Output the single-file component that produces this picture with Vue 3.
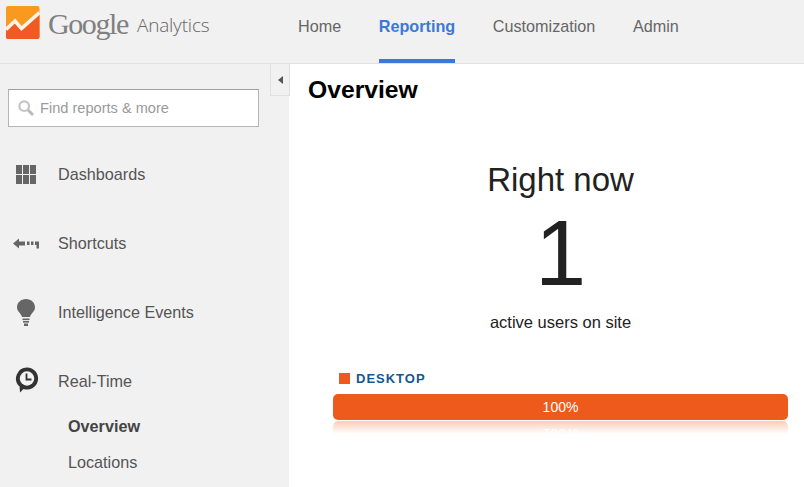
<script setup>
const navItems = [
  { label: 'Home' },
  { label: 'Reporting', active: true },
  { label: 'Customization' },
  { label: 'Admin' }
]
</script>

<template>
  <div class="page">
    <header class="top">
      <div class="brand">
        <svg class="logo" width="34" height="34" viewBox="0 0 34 34">
          <rect x="0" y="0" width="33.500" height="33" rx="2" fill="#f9991f" />
          <path d="M0 22 L9 14 L15 22 L33.500 6 L33.500 31 Q33.500 33 31.500 33 L2 33 Q0 33 0 31 Z" fill="#f15a22" />
          <path d="M0 23.500 L9 15 L15.500 22.500 L33.500 6.500" fill="none" stroke="#fdf3e6" stroke-width="3.600" />
        </svg>
        <span class="google">Google</span>
        <span class="analytics">Analytics</span>
      </div>
      <nav class="nav">
        <a v-for="n in navItems" :key="n.label" class="nav-item" :class="{ active: n.active }">{{ n.label }}</a>
      </nav>
    </header>
    <div class="body">
      <aside class="side">
        <div class="search">
          <svg width="18" height="18" viewBox="0 0 18 18">
            <circle cx="7.200" cy="7.200" r="4.800" fill="none" stroke="#c4c4c4" stroke-width="2.200" />
            <path d="M11 11 L16 16" stroke="#bbb" stroke-width="3" />
          </svg>
          <span>Find reports &amp; more</span>
        </div>
        <div class="menu">
          <div class="menu-item">
            <svg class="ic" width="22" height="22" viewBox="0 0 22 22">
              <g fill="#666">
                <rect x="1" y="1" width="6" height="9" /><rect x="8" y="1" width="6" height="9" /><rect x="15" y="1" width="6" height="9" />
                <rect x="1" y="11" width="6" height="9" /><rect x="8" y="11" width="6" height="9" /><rect x="15" y="11" width="6" height="9" />
              </g>
            </svg>
            <span>Dashboards</span>
          </div>
          <div class="menu-item">
            <svg class="ic" width="28" height="22" viewBox="0 0 28 22">
              <g fill="#666">
                <path d="M1 10.500 L7 5.500 L7 8.500 L13 8.500 L13 12.500 L7 12.500 L7 15.500 Z" />
                <rect x="15" y="8.500" width="2.500" height="3.500" /><rect x="19" y="8.500" width="2.500" height="3.500" />
                <path d="M23 8.500 H27 V15.500 H24.500 V12 H23 Z" />
              </g>
            </svg>
            <span>Shortcuts</span>
          </div>
          <div class="menu-item">
            <svg class="ic" width="22" height="28" viewBox="0 0 22 28">
              <g fill="#666">
                <path d="M11 0 C16 0 20 3.500 20 8.500 C20 12.500 16 14 15 18 L7 18 C6 14 2 12.500 2 8.500 C2 3.500 6 0 11 0 Z" />
                <rect x="7.500" y="19.500" width="7" height="1.600" />
                <rect x="8" y="22" width="6" height="1.600" />
                <rect x="9" y="24.500" width="4" height="2.500" />
              </g>
            </svg>
            <span>Intelligence Events</span>
          </div>
          <div class="menu-item">
            <svg class="ic" width="24" height="26" viewBox="0 0 24 26">
              <path d="M12 0.500 A11 11 0 1 1 8.500 21.900 L5 25.500 L4.600 19.600 A11 11 0 0 1 12 0.500 Z" fill="#333" />
              <circle cx="12" cy="11.500" r="7.200" fill="#f4f4f4" />
              <path d="M11.500 6.500 V12.500 H16.500" fill="none" stroke="#333" stroke-width="1.800" />
            </svg>
            <span>Real-Time</span>
          </div>
        </div>
        <div class="sub sub-active">Overview</div>
        <div class="sub">Locations</div>
      </aside>
      <main class="main">
        <div class="toggle"><i class="tri"></i></div>
        <h1 class="title">Overview</h1>
        <div class="now">Right now</div>
        <div class="count">1</div>
        <div class="active-label">active users on site</div>
        <div class="legend"><i class="swatch"></i><span>DESKTOP</span></div>
        <div class="bar">100%</div>
        <div class="reflect"><div class="bar mirrored">100%</div></div>
      </main>
    </div>
  </div>
</template>

<style scoped>
.page {
  width: 804px;
  height: 487px;
  overflow: hidden;
  font-family: "Liberation Sans", Arial, sans-serif;
  background: #fff;
  display: flex;
  flex-direction: column;
}
.top {
  height: 63px;
  flex: none;
  background: #f1f1f1;
  border-bottom: 1px solid #e2e2e2;
  display: flex;
  position: relative;
}
.brand {
  width: 298px;
  flex: none;
  display: flex;
  align-items: flex-start;
  padding: 6px 0 0 6px;
  box-sizing: border-box;
}
.logo { flex: none; }
.google {
  font-family: "Liberation Serif", serif;
  font-size: 30px;
  line-height: 34px;
  color: #808080;
  margin-left: 8px;
  letter-spacing: -1.400px;
  margin-top: 1px;
}
.analytics {
  font-family: "Open Sans", sans-serif;
  font-size: 19px;
  line-height: 34px;
  font-weight: 300;
  color: #666;
  margin-left: 9px;
  margin-top: 2px;
  letter-spacing: -0.200px;
}
.nav { display: flex; gap: 37.600px; }
.nav-item {
  font-size: 16.200px;
  color: #666;
  height: 63px;
  line-height: 52px;
  box-sizing: border-box;
}
.nav-item.active {
  color: #3d78d8;
  font-weight: 700;
  border-bottom: 4px solid #3d78d8;
}
.body { flex: 1; display: flex; min-height: 0; }
.side {
  width: 289px;
  flex: none;
  background: #f1f1f1;
  padding: 25px 0 0 8px;
  box-sizing: border-box;
}
.search {
  width: 251px;
  height: 38px;
  box-sizing: border-box;
  background: #fff;
  border: 1px solid #b5b5b5;
  border-top-color: #9e9e9e;
  display: flex;
  align-items: center;
  padding-left: 8px;
  gap: 5px;
  font-size: 14.600px;
  color: #9a9a9a;
}
.menu { display: flex; flex-direction: column; margin-top: 13px; margin-left: -8px; }
.menu-item {
  height: 69px;
  position: relative;
  display: flex;
  align-items: center;
  padding-left: 58px;
  font-size: 16.200px;
  color: #555;
}
.ic { position: absolute; left: 15px; top: 50%; transform: translateY(-50%); }
.menu-item:nth-child(2) .ic { left: 12px; }
.menu-item:nth-child(3) .ic { left: 15px; }
.menu-item:nth-child(4) .ic { left: 15px; top: 48%; }
.sub { font-size: 16.200px; color: #555; margin-left: 60px; height: 36px; line-height: 36px; }
.sub-active { font-weight: 700; color: #444; }
.menu + .sub { margin-top: -8px; }
.main { flex: 1; position: relative; padding: 0 16px 0 44px; min-width: 0; }
.toggle {
  position: absolute;
  left: -19px;
  top: 0;
  width: 18px;
  height: 31px;
  background: #f1f1f1;
  border: 1px solid #e0e0e0;
  border-top: 0;
  display: flex;
  align-items: center;
  justify-content: center;
  box-sizing: content-box;
}
.tri {
  width: 0;
  height: 0;
  border-style: solid;
  border-width: 4.500px 5px 4.500px 0;
  border-color: transparent #555 transparent transparent;
}
.title {
  position: absolute;
  left: 19px;
  top: 11px;
  margin: 0;
  font-size: 24.700px;
  line-height: 30px;
  font-weight: 700;
  color: #000;
}
.now {
  padding-top: 97px;
  text-align: center;
  font-size: 33px;
  line-height: 38px;
  color: #222;
  width: 455px;
}
.count {
  text-align: center;
  width: 455px;
  font-size: 92px;
  line-height: 108px;
  color: #222;
  margin-top: 0;
}
.active-label {
  text-align: center;
  width: 455px;
  font-size: 16.500px;
  line-height: 20px;
  color: #222;
  margin-top: 5px;
}
.legend {
  display: flex;
  align-items: center;
  gap: 6px;
  margin: 38px 0 0 6px;
  height: 16px;
  font-size: 13px;
  font-weight: 700;
  letter-spacing: 1px;
  color: #15578f;
}
.swatch { width: 11px; height: 11px; background: #ee5a1c; display: block; }
.bar {
  width: 455px;
  height: 26px;
  margin-top: 8px;
  background: #ee5a1c;
  border-radius: 5px;
  color: #fff;
  font-size: 14px;
  line-height: 26px;
  text-align: center;
}
.reflect {
  width: 455px;
  height: 14px;
  overflow: hidden;
  position: relative;
}
.mirrored {
  margin-top: 1px;
  transform: scaleY(-1);
  opacity: 0.3;
  -webkit-mask-image: linear-gradient(to top, #000 0, transparent 50%);
  mask-image: linear-gradient(to top, #000 0, transparent 50%);
}
</style>

<style>
html, body { margin: 0; overflow: hidden; background: #fff; }
</style>
